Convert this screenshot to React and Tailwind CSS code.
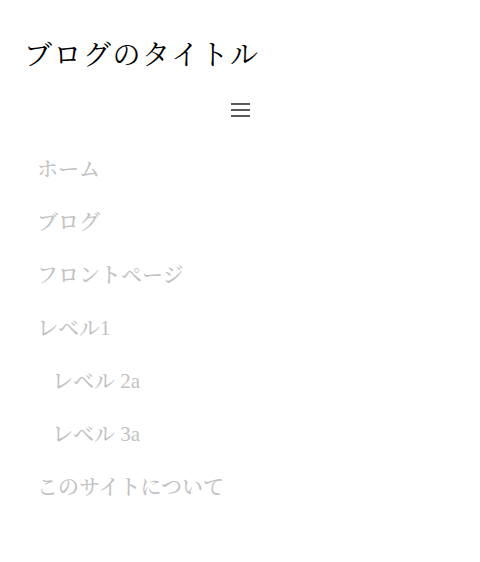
import React from 'react';

const items = [
  { label: 'ホーム', indent: false },
  { label: 'ブログ', indent: false },
  { label: 'フロントページ', indent: false },
  { label: 'レベル1', indent: false },
  { label: 'レベル 2a', indent: true },
  { label: 'レベル 3a', indent: true },
  { label: 'このサイトについて', indent: false },
];

export default function App() {
  return (
    <div
      className="min-h-[562px] w-[480px] bg-white"
      style={{ fontFamily: '"Liberation Serif", "Noto Serif CJK JP", "Noto Sans CJK JP", serif' }}
    >
      <header className="px-[24px] pt-[38px]">
        <h1 className="text-[28px] leading-[36px] text-black tracking-[1.5px]">ブログのタイトル</h1>
      </header>
      <div className="flex justify-center pt-[24px]">
        <button className="flex h-[24px] w-[24px] flex-col items-center justify-center gap-[4px]">
          <span className="block h-[2px] w-[19px] bg-[#5a5a5a]" />
          <span className="block h-[2px] w-[19px] bg-[#5a5a5a]" />
          <span className="block h-[2px] w-[19px] bg-[#5a5a5a]" />
        </button>
      </div>
      <nav className="px-[37px] pt-[21px]">
        <ul className="flex flex-col">
          {items.map((item) => (
            <li
              key={item.label}
              className={`h-[53px] text-[21px] font-medium leading-[53px] text-[#c2c2c2] ${item.indent ? 'pl-[15px]' : ''}`}
            >
              {item.label}
            </li>
          ))}
        </ul>
      </nav>
    </div>
  );
}
